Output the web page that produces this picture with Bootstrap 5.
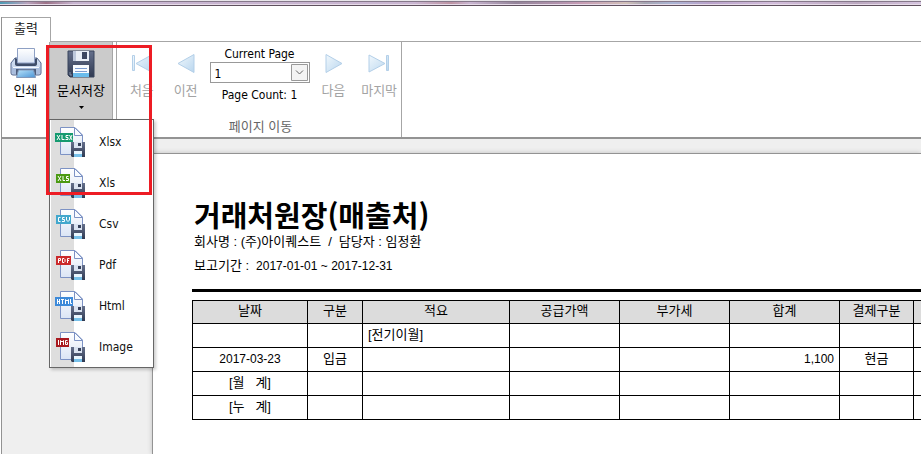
<!DOCTYPE html>
<html lang="ko">
<head>
<meta charset="utf-8">
<meta name="viewport" content="width=device-width, initial-scale=1">
<title>거래처원장(매출처)</title>
<link href="https://cdn.jsdelivr.net/npm/bootstrap@5.3.0/dist/css/bootstrap.min.css" rel="stylesheet">
<style>
body{font-family:"Liberation Sans","Noto Sans CJK KR",sans-serif;font-size:13px;line-height:16px;color:#000;overflow:hidden}
.latin{font-family:"DejaVu Sans Condensed","Open Sans",sans-serif;font-size:12px}
.glass{height:6px;border-top:1px solid #e8e6ea;border-bottom:1px solid #5f505e;
 background:linear-gradient(#86788a 1px,transparent 1px 3px,#e6dbe8 3px),linear-gradient(90deg,#4b9bb5 0,#b9a3bd 3%,#9c7187 5%,#c7b4d0 8%,#c9b5d1 45%,#bd93a3 49%,#c9b5d1 51%,#94849a 56%,#b493ae 61%,#c69bb4 63%,#d1c0b8 68%,#a5a5b2 70%,#aab4d4 73%,#b9a2cb 77%,#d2bddb 84%,#bba8c0 93%,#d5c4df 100%)}
.viewer{border-left:1px solid #929292;margin:11px 0 0 1px}
.tabstrip{height:25px}
.tab-on{width:49px;height:25px;padding-bottom:2px;border:1px solid #a6a6a6;border-width:1px 1px 0 0;color:#222}
.tab-fill{border-bottom:1px solid #a6a6a6}
.ribbon{height:97px;border-bottom:2px solid #939393}
.ribbon-group{border-right:1px solid #a6a6a6}
.file-group{padding-right:3px}
.tool{background:none;border:0;padding:5px 0 0;display:flex;flex-direction:column;align-items:center;color:#000;white-space:nowrap}
.tool svg{flex:none}
.tool:disabled{color:#a3a3a3}
.tool-print{width:47px}
.tool-save{width:64px;height:77px;background:#cbcbcb;border:solid #a6a6a6;border-width:0 1px}
.tool-nav{width:44px}
.tool-last{margin-left:2px}
.nav-group{width:285px;padding-left:3px}
.pager{width:100px;padding-top:4px;margin:0 2px}
.page-pick{width:100px;height:21px;margin-bottom:4px;border:1px solid #999;background:#fff;position:relative}
.page-pick select{appearance:none;border:0;background:transparent;width:100%;height:21px;padding:0 4px;outline:0;color:#000;display:block}
.pick-arrow{position:absolute;right:1px;top:1px;pointer-events:none}
.group-title{color:#666;padding-bottom:2px}
.save-menu{--bs-dropdown-min-width:105px;position:absolute;top:77px;left:0;width:105px;padding:1px 1px 0;border:1px solid #666;border-radius:0;background:linear-gradient(90deg,#fff 1px,#dedede 1px 24px,#fff 24px);box-shadow:2px 2px 3px #0003;z-index:5}
.save-menu .dropdown-item{height:41px;padding:0 0 0 4px;gap:14px;color:#111;font-size:12px}
.frame-red{position:absolute;left:46px;top:45px;width:106px;height:150px;border:3px solid #ed1c24;z-index:10;pointer-events:none}
.desk{background:#efefef;padding:14px 0 0 150px}
.sheet{background:#fff;border:solid #939393;border-width:1px 0 0 1px;box-shadow:0 0 5px #0003;padding:40px 0 0 39px;min-height:301px;white-space:nowrap}
.sheet h1{font-size:29px;line-height:40px;font-weight:700;margin:0 0 0 2px;font-family:"Noto Sans CJK KR",sans-serif}
.meta{margin:0 0 8px 2px;gap:7px}
.num{font-size:12px}
.rule{height:3px;background:#000;margin:15px 0 8px}
.ledger{table-layout:fixed;border-collapse:collapse;width:100%}
.ledger th,.ledger td{border:1px solid #000;height:24px;padding:0 5px 2px;font-weight:400;line-height:16px;text-align:center}
.ledger th{background:#dcdcdc;height:23px}
.ledger tr>:last-child{border-right:0;padding:0}
.c115{width:115px}.c55{width:55px}.c147{width:147px}.c110{width:110px}.c74{width:74px}
</style>
<script src="https://cdn.jsdelivr.net/npm/bootstrap@5.3.0/dist/js/bootstrap.bundle.min.js" defer></script>
</head>
<body class="bg-white">
<svg class="position-absolute" width="0" height="0" aria-hidden="true">
 <defs>
  <linearGradient id="gSlate" x2="0" y2="1"><stop stop-color="#65708c"/><stop offset="1" stop-color="#303a52"/></linearGradient>
  <linearGradient id="gBlue" x2="1" y2="1"><stop stop-color="#f1f8fd"/><stop offset="1" stop-color="#b9d6ee"/></linearGradient>
  <linearGradient id="gPaper" x2="0" y2="1"><stop stop-color="#fff"/><stop offset="1" stop-color="#dbe5f5"/></linearGradient>
  <linearGradient id="gSky" x2="1" y2="1"><stop stop-color="#b9e3fa"/><stop offset="1" stop-color="#4b94d5"/></linearGradient>
 </defs>
 <symbol id="disk" viewBox="0 0 28 28">
  <path d="M1 1H27V27H3L1 25Z" fill="url(#gSlate)" stroke="#39445c"/>
  <path d="M6 1H22V11H6Z" fill="#e9eef6"/><path d="M15 2H20V9H15Z" fill="#3c465f"/><path d="M6 1H9V11H6Z" fill="#bdc8dc"/>
  <path d="M6 15H22V27H6Z" fill="#f8fbff"/><path d="M6 23H22V27H6Z" fill="#6abcec"/>
  <path d="M8 18.500H20M8 21.500H20" stroke="#7b9bd0"/><path d="M3 22V25H5" stroke="#8793ad" fill="none"/>
 </symbol>
 <symbol id="export" viewBox="0 0 30 30">
  <path d="M5.500.5H20L27.500 8V27.500H5.500Z" fill="url(#gPaper)" stroke="#7c92c4"/>
  <path d="M19.500.5V8.500H27.500Z" fill="#f8fbff" stroke="#7c92c4"/>
  <path d="M16 15H30V30H17L16 29Z" fill="url(#gSlate)"/><path d="M19 15H27V21H19Z" fill="#dae3f1"/><path d="M23 16H26V19H23Z" fill="#37415a"/><path d="M19 24H27V30H19Z" fill="#e9f6ff"/><path d="M19 27H27V30H19Z" fill="#78c1ea"/>
 </symbol>
</svg>

<div class="glass"></div>
<main class="viewer">
 <div class="tabstrip d-flex">
  <a href="#ribbon" class="tab-on d-flex justify-content-center align-items-center text-decoration-none">출력</a>
  <div class="tab-fill flex-grow-1"></div>
 </div>
 <div class="ribbon d-flex" id="ribbon">
  <div class="ribbon-group file-group d-flex">
   <button class="tool tool-print" type="button">
    <svg width="32" height="36" viewBox="0 0 32 36" aria-hidden="true">
     <path d="M5 11H27L31 16V26Q31 28 29 28H3Q1 28 1 26V16Z" fill="#cbd9ee" stroke="#53678f"/>
     <path d="M5 11V17Q5 19 8 19H24Q27 19 27 17V11L25 12V15H7V12Z" fill="#3f4d69"/>
     <path d="M7.500 1.500H24.500V16H7.500Z" fill="url(#gPaper)" stroke="#8ea0c4"/>
     <path d="M2 20H30V26Q30 27 28 27H4Q2 27 2 26Z" fill="#a9bddd"/><path d="M3 20.500H29" stroke="#f5f9ff"/>
     <path d="M6 22H26V28H6Z" fill="#4c5c7a"/><path d="M8.500 23H23.500L25.500 30.500H6.500Z" fill="url(#gSky)" stroke="#8197b9"/>
    </svg>
    <span>인쇄</span>
   </button>
   <div class="position-relative">
    <button class="tool tool-save" type="button" aria-expanded="true" aria-controls="saveMenu">
     <svg width="28" height="36" viewBox="0 0 28 36" aria-hidden="true"><use href="#disk" y="3" width="28" height="28"/></svg>
     <span>문서저장</span>
     <svg class="mt-1" width="5" height="10" viewBox="0 0 5 10" aria-hidden="true"><path d="M0 3H5L2.500 6Z"/></svg>
    </button>
    <div class="dropdown-menu save-menu show latin" id="saveMenu">
     <a href="#" class="dropdown-item d-flex align-items-center"><svg width="30" height="30" aria-hidden="true"><use href="#export" width="30" height="30"/><path d="M0 6H18V15H0Z" fill="#159a70"/><path d="M2 8L5 13M5 8L2 13M7 8V12.500H9.500M13.500 8.500H11V10.500H13V12.500H10.500M14.500 8L17 13M17 8L14.500 13" stroke="#fff" fill="none"/></svg>Xlsx</a>
     <a href="#" class="dropdown-item d-flex align-items-center"><svg width="30" height="30" aria-hidden="true"><use href="#export" width="30" height="30"/><path d="M1 6H15V15H1Z" fill="#4b9a12"/><path d="M3 8L6 13M6 8L3 13M8 8V12.500H10M13.500 8.500H11.500V10.500H13.500V12.500H11" stroke="#fff" fill="none"/></svg>Xls</a>
     <a href="#" class="dropdown-item d-flex align-items-center"><svg width="30" height="30" aria-hidden="true"><use href="#export" width="30" height="30"/><path d="M1 6H16V15H1Z" fill="#43a8cd"/><path d="M5.500 8.500H3.500V12.500H5.500M9.500 8.500H7.500V10.500H9.500V12.500H7M11.500 8V11L13 12.500L14.500 11V8" stroke="#fff" fill="none"/></svg>Csv</a>
     <a href="#" class="dropdown-item d-flex align-items-center"><svg width="30" height="30" aria-hidden="true"><use href="#export" width="30" height="30"/><path d="M1 6H16V15H1Z" fill="#cb2a2c"/><path d="M3.500 13V8.500H5.500V10.500H3.500M7.500 8.500H9L10 9.500V11.500L9 12.500H7.500ZM12.500 13V8.500H14.500M12.500 10.500H14" stroke="#fff" fill="none"/></svg>Pdf</a>
     <a href="#" class="dropdown-item d-flex align-items-center"><svg width="30" height="30" aria-hidden="true"><use href="#export" width="30" height="30"/><path d="M0 6H18V15H0Z" fill="#3d8ad9"/><path d="M2.500 8V13M4.500 8V13M2.500 10.500H4.500M6 8.500H9M7.500 8.500V13M10.500 13V8.500L12 10L13.500 8.500V13M15.500 8V12.500H17" stroke="#fff" fill="none"/></svg>Html</a>
     <a href="#" class="dropdown-item d-flex align-items-center"><svg width="30" height="30" aria-hidden="true"><use href="#export" width="30" height="30"/><path d="M1 6H14V15H1Z" fill="#a9191f"/><path d="M3.500 8V13M5.500 13V8.500L7 10L8.500 8.500V13M12.500 8.500H10.500V12.500H12.500V10.500H11.500" stroke="#fff" fill="none"/></svg>Image</a>
    </div>
   </div>
  </div>
  <div class="ribbon-group nav-group d-flex flex-column">
   <div class="d-flex">
    <button class="tool tool-nav" type="button" disabled><svg width="22" height="36" viewBox="0 0 22 36" aria-hidden="true"><path d="M1.500 8.500H3.500V23.500H1.500ZM20.500 8V25L5 16.500Z" fill="url(#gBlue)" stroke="#b3cfe8"/></svg><span>처음</span></button>
    <button class="tool tool-nav" type="button" disabled><svg width="20" height="36" viewBox="0 0 20 36" aria-hidden="true"><path d="M18 7.500V25.500L2 16.500Z" fill="url(#gBlue)" stroke="#b3cfe8"/></svg><span>이전</span></button>
    <div class="pager d-flex flex-column align-items-center latin">
     <label for="pageNo">Current Page</label>
     <div class="page-pick"><select id="pageNo"><option>1</option></select>
      <svg class="pick-arrow" width="17" height="17" viewBox="0 0 17 17" aria-hidden="true"><path d="M.5.5H16.500V16.500H.5Z" fill="#f4f4f4" stroke="#999"/><path d="M5 6.500L8.500 10L12 6.500" fill="none" stroke="#666"/></svg></div>
     <span>Page Count: 1</span>
    </div>
    <button class="tool tool-nav" type="button" disabled><svg width="20" height="36" viewBox="0 0 20 36" aria-hidden="true"><path d="M3 7.500V25.500L19 16.500Z" fill="url(#gBlue)" stroke="#b3cfe8"/></svg><span>다음</span></button>
    <button class="tool tool-nav tool-last" type="button" disabled><svg width="22" height="36" viewBox="0 0 22 36" aria-hidden="true"><path d="M18.500 8.500H20.500V23.500H18.500ZM1 8V25L17 16.500Z" fill="url(#gBlue)" stroke="#b3cfe8"/></svg><span>마지막</span></button>
   </div>
   <div class="group-title text-center mt-auto">페이지 이동</div>
  </div>
 </div>
 <div class="desk">
  <article class="sheet">
   <h1>거래처원장(매출처)</h1>
   <div class="meta d-flex"><span>회사명 : (주)아이퀘스트</span><span>/</span><span>담당자 : 임정환</span></div>
   <div class="meta d-flex"><span>보고기간 :</span><span class="num">2017-01-01 ~ 2017-12-31</span></div>
   <div class="rule"></div>
   <table class="ledger">
    <colgroup><col class="c115"><col class="c55"><col class="c147"><col class="c110"><col class="c110"><col class="c110"><col class="c74"><col></colgroup>
    <thead><tr><th>날짜</th><th>구분</th><th>적요</th><th>공급가액</th><th>부가세</th><th>합계</th><th>결제구분</th><th></th></tr></thead>
    <tbody>
     <tr><td></td><td></td><td class="text-start">[전기이월]</td><td></td><td></td><td></td><td></td><td></td></tr>
     <tr><td class="num">2017-03-23</td><td>입금</td><td></td><td></td><td></td><td class="num text-end">1,100</td><td>현금</td><td></td></tr>
     <tr><td>[월 &nbsp; 계]</td><td></td><td></td><td></td><td></td><td></td><td></td><td></td></tr>
     <tr><td>[누 &nbsp; 계]</td><td></td><td></td><td></td><td></td><td></td><td></td><td></td></tr>
    </tbody>
   </table>
  </article>
 </div>
</main>
<div class="frame-red"></div>
</body>
</html>
